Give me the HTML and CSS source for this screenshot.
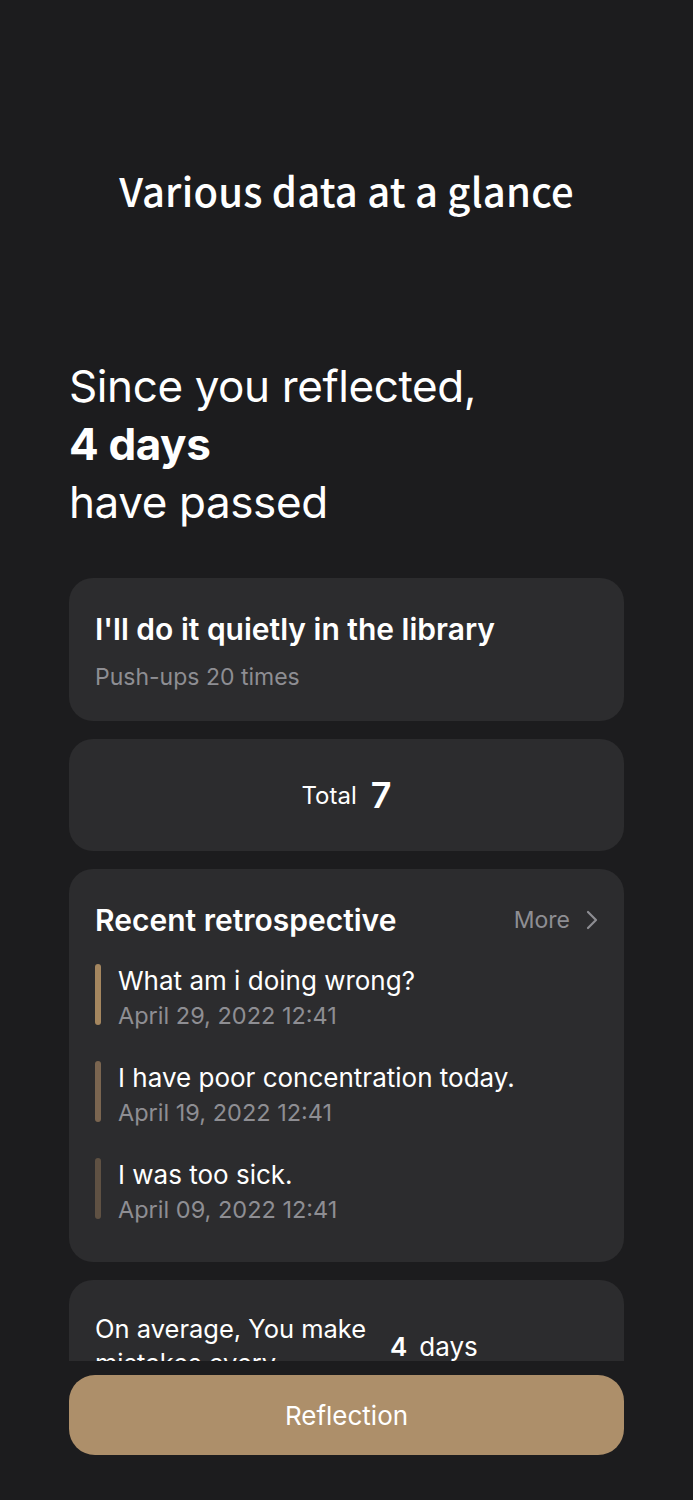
FILE: index.html
```html
<!DOCTYPE html>
<html>
<head>
<meta charset="utf-8">
<link rel="stylesheet" href="styles.css">
</head>
<body>
<div class="screen">
  <div class="scroll">
    <h1 class="title">Various data at a glance</h1>
    <div class="hero">
      <div>Since you reflected,</div>
      <div class="strong">4 days</div>
      <div>have passed</div>
    </div>
    <div class="cards">
      <div class="card goal">
        <div class="goal-title">I'll do it quietly in the library</div>
        <div class="goal-sub">Push-ups 20 times</div>
      </div>
      <div class="card total">
        <span class="total-label">Total</span>
        <span class="total-num">7</span>
      </div>
      <div class="card recent">
        <div class="recent-head">
          <div class="recent-title">Recent retrospective</div>
          <div class="more">More
            <svg class="chev" width="12" height="20" viewBox="0 0 12 20"><path d="M2 2 L10 10 L2 18" fill="none" stroke="#8e8e93" stroke-width="2.2" stroke-linecap="round" stroke-linejoin="round"/></svg>
          </div>
        </div>
        <div class="items">
          <div class="item">
            <div class="bar bar1"></div>
            <div class="item-text">
              <div class="item-title">What am i doing wrong?</div>
              <div class="item-date">April 29, 2022 12:41</div>
            </div>
          </div>
          <div class="item">
            <div class="bar bar2"></div>
            <div class="item-text">
              <div class="item-title">I have poor concentration today.</div>
              <div class="item-date">April 19, 2022 12:41</div>
            </div>
          </div>
          <div class="item">
            <div class="bar bar3"></div>
            <div class="item-text">
              <div class="item-title">I was too sick.</div>
              <div class="item-date">April 09, 2022 12:41</div>
            </div>
          </div>
        </div>
      </div>
      <div class="card avg">
        <div class="avg-text">On average, You make mistakes every</div>
        <div class="avg-val"><span class="avg-num">4</span><span class="avg-unit">days</span></div>
      </div>
    </div>
  </div>
  <div class="footer">
    <button class="btn">Reflection</button>
  </div>
</div>
</body>
</html>
```

FILE: styles.css
```css
* { box-sizing: border-box; }
html, body { margin: 0; padding: 0; background: #1c1c1e; }
body {
  font-family: Inter, "Liberation Sans", sans-serif;
  color: #ffffff;
}
.screen {
  width: 693px;
  height: 1500px;
  display: flex;
  flex-direction: column;
  background: #1c1c1e;
}
.scroll {
  height: 1361px;
  overflow: hidden;
  padding: 0 69px 0 69px;
}
.title {
  margin: 0;
  padding-top: 163px;
  text-align: center;
  font-family: "Noto Sans CJK KR", "Open Sans", sans-serif;
  font-weight: 500;
  font-size: 40px;
  line-height: 54px;
  letter-spacing: 0.2px;
}
.hero {
  margin-top: 140px;
  font-size: 44px;
  line-height: 58px;
  font-weight: 400;
  letter-spacing: -0.4px;
}
.hero .strong { font-weight: 700; }
.cards {
  margin-top: 47px;
  display: flex;
  flex-direction: column;
  gap: 18px;
}
.card {
  background: #2c2c2e;
  border-radius: 24px;
}
.goal {
  height: 143px;
  padding: 30px 26px 0 26px;
}
.goal-title {
  font-size: 30px;
  font-weight: 600;
  line-height: 42px;
  letter-spacing: 0;
}
.goal-sub {
  margin-top: 11px;
  font-size: 23px;
  line-height: 32px;
  color: #8e8e93;
}
.total {
  height: 112px;
  display: flex;
  align-items: center;
  justify-content: center;
  gap: 14px;
}
.total-label { font-size: 24px; }
.total-num { font-size: 36px; font-weight: 600; }
.recent {
  height: 393px;
  padding: 30px 26px 0 26px;
}
.recent-head {
  display: flex;
  justify-content: space-between;
  align-items: center;
  height: 42px;
}
.recent-title {
  font-size: 30px;
  font-weight: 600;
  letter-spacing: 0;
}
.more {
  display: flex;
  align-items: center;
  gap: 16px;
  font-size: 23px;
  color: #8e8e93;
}
.items {
  margin-top: 23px;
  display: flex;
  flex-direction: column;
  gap: 36px;
}
.item {
  display: flex;
  gap: 17px;
  height: 61px;
}
.bar {
  width: 6px;
  border-radius: 3px;
  flex: none;
}
.bar1 { background: #a4865f; }
.bar2 { background: #7a6550; }
.bar3 { background: #5f5143; }
.item-text { margin-top: 0; }
.item-title { font-size: 26px; line-height: 34px; }
.item-date { font-size: 23.5px; line-height: 36px; color: #8e8e93; }
.avg {
  height: 140px;
  padding: 32px 26px 0 26px;
  display: flex;
  align-items: flex-start;
}
.avg-text {
  width: 295px;
  font-size: 25.5px;
  line-height: 34px;
}
.avg-val {
  margin-top: 19px;
  display: flex;
  align-items: baseline;
  gap: 12px;
}
.avg-num { font-size: 26px; font-weight: 600; }
.avg-unit { font-size: 26px; }
.footer {
  padding: 14px 69px 0 69px;
}
.btn {
  width: 100%;
  height: 80px;
  border: none;
  border-radius: 26px;
  background: #ad8f6a;
  color: #ffffff;
  font-family: Inter, "Liberation Sans", sans-serif;
  font-size: 26px;
}
```
